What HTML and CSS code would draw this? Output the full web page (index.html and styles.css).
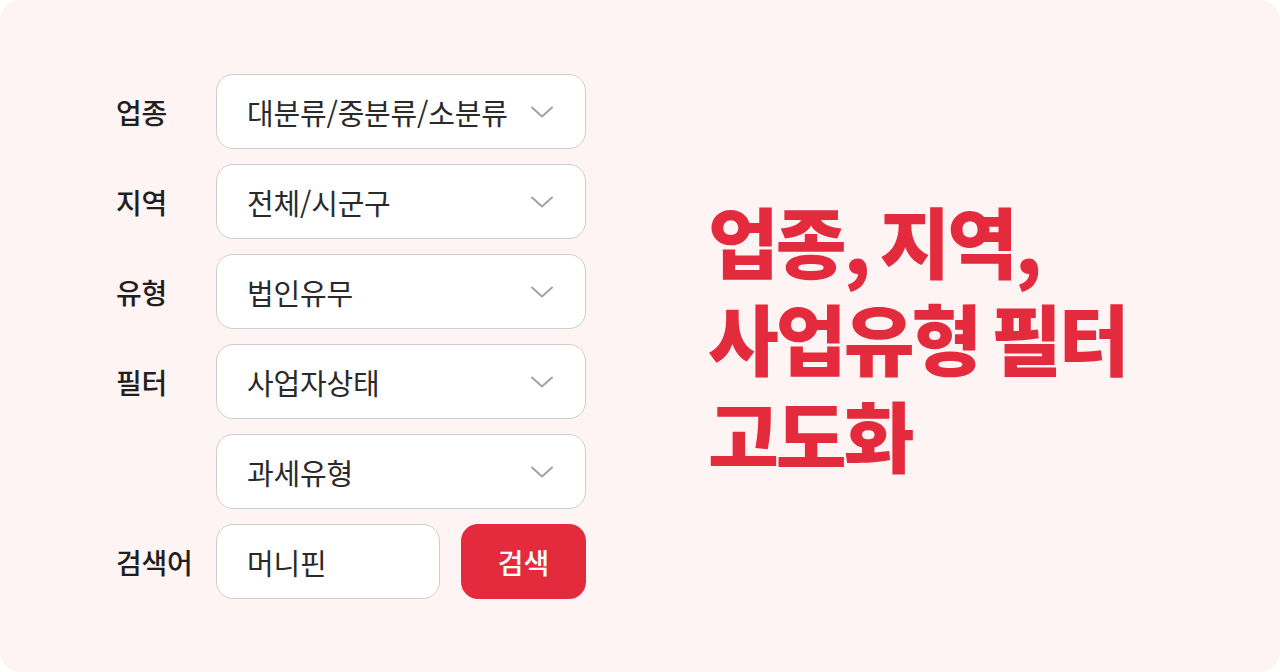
FILE: index.html
```html
<!DOCTYPE html>
<html lang="ko">
<head>
<meta charset="utf-8">
<link rel="stylesheet" href="styles.css">
</head>
<body>
<div class="card">
  <div class="form">
    <div class="label">업종</div>
    <div class="select"><span>대분류/중분류/소분류</span><svg class="chev" viewBox="0 0 22 12"><path d="M1 1.5 L11 10.5 L21 1.5"/></svg></div>
    <div class="label">지역</div>
    <div class="select"><span>전체/시군구</span><svg class="chev" viewBox="0 0 22 12"><path d="M1 1.5 L11 10.5 L21 1.5"/></svg></div>
    <div class="label">유형</div>
    <div class="select"><span>법인유무</span><svg class="chev" viewBox="0 0 22 12"><path d="M1 1.5 L11 10.5 L21 1.5"/></svg></div>
    <div class="label">필터</div>
    <div class="select"><span>사업자상태</span><svg class="chev" viewBox="0 0 22 12"><path d="M1 1.5 L11 10.5 L21 1.5"/></svg></div>
    <div class="label"></div>
    <div class="select"><span>과세유형</span><svg class="chev" viewBox="0 0 22 12"><path d="M1 1.5 L11 10.5 L21 1.5"/></svg></div>
    <div class="label">검색어</div>
    <div class="search-row">
      <div class="input">머니핀</div>
      <div class="button">검색</div>
    </div>
  </div>
  <h1 class="headline">업종, 지역,<br>사업유형 필터<br>고도화</h1>
</div>
</body>
</html>
```

FILE: styles.css
```css
html, body {
  margin: 0;
  padding: 0;
  background: #ffffff;
}
body {
  font-family: "Noto Sans CJK KR", "Noto Sans", sans-serif;
}
.card {
  width: 1280px;
  height: 672px;
  box-sizing: border-box;
  background: #fff4f4;
  border-radius: 20px;
  display: flex;
  align-items: center;
  padding-left: 116px;
}
.form {
  display: grid;
  grid-template-columns: 100px 370px;
  grid-auto-rows: 75px;
  row-gap: 15px;
  margin-top: 1px;
}
.label {
  display: flex;
  align-items: center;
  font-size: 28px;
  font-weight: 500;
  color: #1f1f1f;
  letter-spacing: -0.3px;
}
.select, .input {
  box-sizing: border-box;
  background: #ffffff;
  border: 1.5px solid #cbced4;
  border-radius: 17px;
  display: flex;
  align-items: center;
  justify-content: space-between;
  padding: 0 32px 0 30px;
  font-size: 29px;
  color: #2a2a2a;
  letter-spacing: -0.2px;
}
.chev {
  width: 22px;
  height: 12px;
  fill: none;
  stroke: #a3a3a3;
  stroke-width: 2;
  stroke-linecap: round;
  stroke-linejoin: round;
}
.search-row {
  display: flex;
  gap: 21px;
}
.input {
  width: 224px;
}
.button {
  flex: 1;
  background: #e42b3e;
  border-radius: 17px;
  color: #ffffff;
  font-size: 28px;
  font-weight: 500;
  display: flex;
  align-items: center;
  justify-content: center;
}
.headline {
  margin: 0 0 0 122px;
  color: #e42b3e;
  font-size: 77px;
  font-weight: 800;
  line-height: 97px;
  letter-spacing: -3px;
  word-spacing: -7px;
}
```
